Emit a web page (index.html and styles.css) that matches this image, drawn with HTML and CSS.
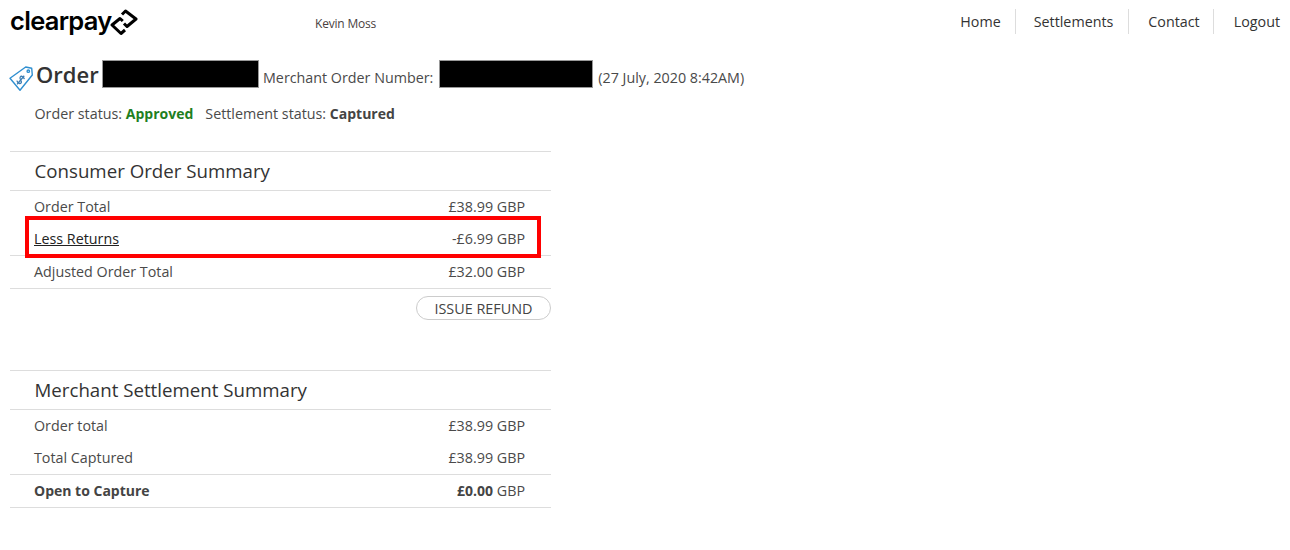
FILE: index.html
```html
<!DOCTYPE html>
<html lang="en">
<head>
<meta charset="utf-8">
<title>Order</title>
<link rel="stylesheet" href="styles.css">
</head>
<body>
<header class="topbar">
  <div class="logo">
    <span class="logo-text">clearpay</span>
    <svg class="logo-icon" width="28" height="28" viewBox="0 0 28 28" fill="none" stroke="#000" stroke-width="3" stroke-linejoin="round" stroke-linecap="butt">
      <path d="M12 6.5 L15.5 3 L26 11 L17 18.5 L14 15.5"/>
      <path d="M15 22 L11 25.5 L2 17 L10 10.5 L12.8 13"/>
    </svg>
  </div>
  <div class="user">Kevin Moss</div>
  <nav class="nav">
    <a class="nav-item">Home</a>
    <a class="nav-item">Settlements</a>
    <a class="nav-item">Contact</a>
    <a class="nav-item">Logout</a>
  </nav>
</header>
<main class="content">
  <div class="title-row">
    <svg class="tag" width="26" height="28" viewBox="0 0 26 28" fill="none" stroke="#2f8fd0" stroke-width="1.4" stroke-linejoin="round">
      <path d="M1 14.3 L16.7 3 L22.7 4.3 L23.3 11 L11 26.3 Z"/>
      <circle cx="19.3" cy="7.2" r="1.2"/>
      <g transform="rotate(40 11.7 16)" stroke-width="1.3" stroke="#3d7fb5">
        <path d="M14 13 Q12 11.5 10 12.5 Q8.6 14 10.5 15.4 L13 16.6 Q14.8 18 13.2 19.4 Q11 20.4 9.2 19 M11.7 10.5 L11.7 21.5"/>
      </g>
    </svg>
    <h1 class="order-title">Order</h1>
    <span class="redact redact-one"></span>
    <span class="merchant">Merchant Order Number:</span>
    <span class="redact redact-two"></span>
    <span class="merchant date">(27 July, 2020 8:42AM)</span>
  </div>
  <p class="status">Order status: <b class="approved">Approved</b><span class="settle">Settlement status: <b class="captured">Captured</b></span></p>

  <section class="panel">
    <h2 class="panel-title">Consumer Order Summary</h2>
    <div class="row"><span>Order Total</span><span>£38.99 GBP</span></div>
    <div class="row ruled highlight-host"><a class="link">Less Returns</a><span>-£6.99 GBP</span><span class="highlight"></span></div>
    <div class="row ruled"><span>Adjusted Order Total</span><span>£32.00 GBP</span></div>
    <div class="actions"><button class="refund" type="button">ISSUE REFUND</button></div>
  </section>

  <section class="panel second">
    <h2 class="panel-title">Merchant Settlement Summary</h2>
    <div class="row"><span>Order total</span><span>£38.99 GBP</span></div>
    <div class="row ruled"><span>Total Captured</span><span>£38.99 GBP</span></div>
    <div class="row ruled"><b class="strong">Open to Capture</b><span><b class="strong">£0.00</b> GBP</span></div>
  </section>
</main>
</body>
</html>
```
FILE: styles.css
```css
* { box-sizing: border-box; }
html, body { margin: 0; padding: 0; background: #fff; }
body {
  font-family: "Open Sans", "Liberation Sans", sans-serif;
  font-size: 14.3px;
  color: #4a4a4a;
  height: 550px;
  overflow: hidden;
}
.topbar {
  display: flex;
  align-items: flex-start;
  height: 57px;
  padding: 8px 10px 0;
}
.logo { display: flex; align-items: flex-start; width: 305px; height: 26px; }
.logo-text {
  font-family: Inter, "Liberation Sans", sans-serif;
  font-weight: 600;
  font-size: 25.5px;
  line-height: 26px;
  letter-spacing: -0.7px;
  color: #000;
}
.logo-icon { margin-left: -2px; flex: none; }
.user { font-size: 12px; line-height: 16px; margin-top: 8px; letter-spacing: -0.2px; color: #4a3f3f; }
.nav { display: flex; margin-left: auto; margin-top: 1px; }
.nav-item {
  font-size: 14.3px;
  line-height: 25px;
  color: #333;
  padding: 0 15px 0 19px;
  border-right: 1px solid #ddd;
}
.nav-item:nth-child(1) { padding-left: 0; padding-right: 14px; }
.nav-item:nth-child(2) { padding-left: 18px; }
.nav-item:nth-child(3) { padding-right: 13px; }
.nav-item:nth-child(4) { border-right: 0; padding-left: 20px; padding-right: 0; }
.content { padding: 0 0 0 10px; }
.title-row { display: flex; align-items: flex-end; height: 31px; margin-top: 2px; }
.tag { margin: 0 1px -2px -1px; flex: none; }
.order-title { margin: 0; font-size: 22px; font-weight: 550; line-height: 32px; color: #333; width: 66px; }
.redact { display: inline-block; background: #000; height: 28px; margin-bottom: 2px; border: 1px solid #999; }
.redact-one { width: 157px; margin-right: 4px; }
.redact-two { width: 154px; margin: 0 5px 2px 6px; }
.merchant { font-size: 14.3px; line-height: 20px; color: #4a4a4a; margin-bottom: 2px; }
.status { margin: 14px 0 0 24.5px; line-height: 20px; }
.approved { color: #1f7f1f; font-weight: 700; font-size: 14px; }
.captured { font-weight: 700; font-size: 14px; color: #444; }
.settle { margin-left: 12px; }
.panel { width: 541px; margin-top: 27px; border-top: 1px solid #ddd; }
.second { margin-top: 50px; }
.panel-title {
  margin: 0;
  height: 39px;
  padding-left: 24.5px;
  font-size: 18.7px;
  font-weight: 400;
  line-height: 37px;
  color: #333;
  border-bottom: 1px solid #ddd;
}
.row {
  display: flex;
  justify-content: space-between;
  height: 32px;
  padding: 0 26px 0 24px;
  line-height: 32px;
  border-bottom: 1px solid transparent;
}
.row.ruled { height: 33px; border-bottom-color: #ddd; }
.highlight-host { position: relative; }
.highlight {
  position: absolute;
  left: 15px;
  top: -7px;
  width: 516px;
  height: 42px;
  border: 4px solid #f00;
}
.link { color: #222; text-decoration: underline; }
.strong { font-weight: 700; font-size: 14px; color: #444; }
.actions { display: flex; justify-content: flex-end; margin-top: 7px; }
.refund {
  font-family: inherit;
  font-size: 14.4px;
  color: #444;
  width: 135px;
  height: 24px;
  padding: 0;
  background: #fff;
  border: 1px solid #ccc;
  border-radius: 12px;
}
```
